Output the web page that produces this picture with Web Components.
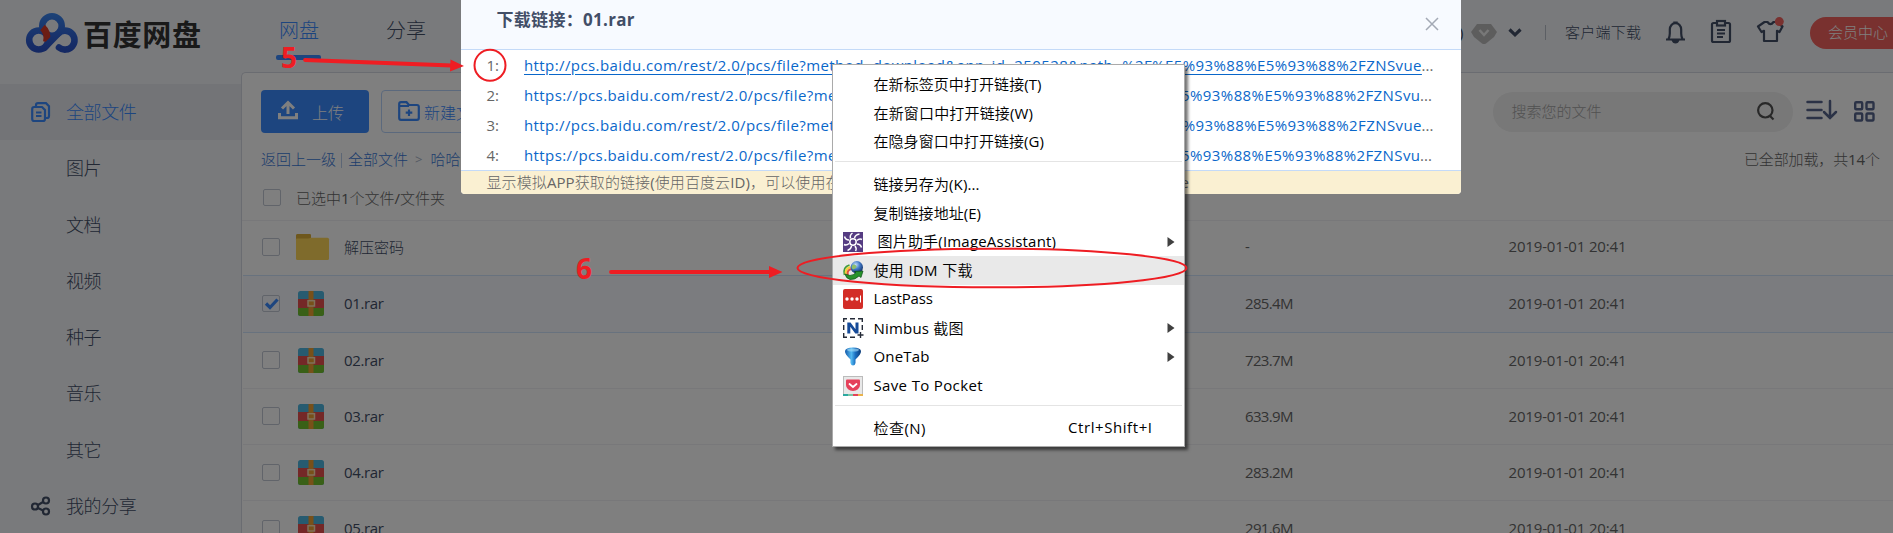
<!DOCTYPE html>
<html lang="zh-CN">
<head>
<meta charset="utf-8">
<title>百度网盘</title>
<style>
html,body{margin:0;padding:0;height:100%;overflow:hidden}
body{font-family:"Open Sans","Noto Sans CJK SC Light","Noto Sans CJK SC",sans-serif;font-size:15px;color:#424e67}
</style>
</head>
<body>
<disk-app></disk-app>
<script>
const ICONS = {
  logo: [52,40,`<defs><linearGradient id="l" x1="0" y1="0" x2="0" y2="40" gradientUnits="userSpaceOnUse"><stop stop-color="#3a86ee"/><stop offset=".6" stop-color="#2f62d6"/><stop offset="1" stop-color="#2a50c4"/></linearGradient></defs><g fill="none" stroke-linecap="round" stroke="url(#l)" stroke-width="6.600"><circle cx="26" cy="13" r="9.700"/><circle cx="12.700" cy="27" r="9.500"/><path d="M16.500 14.500Q22.500 19.500 20.500 29" stroke="#d83a28" stroke-width="7" stroke-linecap="butt"/><path d="M18.500 34.700L32 20.700A9.500 9.500 0 1 1 33 34.500"/></g>`],
  files: [20,20,`<g fill="none" stroke="#3b8bff" stroke-width="2.200"><path d="M5 5V3.200q0-2 2-2h8l3 3V14q0 2-2 2h-2"/><path d="M3.200 5h7.800l3 3v9q0 2-2 2H3.200q-2 0-2-2V7q0-2 2-2z"/><path d="M5 10.500h5.500M5 14h5.500"/></g>`],
  share: [20,20,`<g fill="none" stroke="#424e67" stroke-width="2.200"><circle cx="4" cy="10.500" r="3"/><circle cx="15" cy="4.500" r="3"/><circle cx="15" cy="15.500" r="3"/><path d="M7 9l5-3M7 12l5 2.500"/></g>`],
  upload: [20,20,`<g fill="none" stroke="#fff" stroke-width="3"><path d="M10 14V3M4 8.500L10 2.500l6 6"/><path d="M1.500 13v4.700h17V13"/></g>`],
  newfolder: [22,20,`<g fill="none" stroke="#3b8bff" stroke-width="2.200"><path d="M1.200 5V3q0-1.800 1.800-1.800h5.500L11 4h8q1.800 0 1.800 1.800V17q0 1.800-1.800 1.800H3Q1.200 18.800 1.200 17zM1.200 5H11M11 8.500v6.500M7.700 11.700h6.600"/></g>`],
  folder: [33,26,`<path d="M0 4V2Q0 0 2 0h11.500q1.500 0 1.500 2v5H0z" fill="#dcae38"/><rect y="3.700" width="33" height="22.300" rx="1.500" fill="#ffd659"/><path d="M0 4.500V2Q0 0 2 0h11.500q1.500 0 1.500 2v1q-1 1.500-3 1.500z" fill="#dcae38"/>`],
  rar: [26,25,`<defs><clipPath id="c"><rect width="26" height="25" rx="2.500"/></clipPath></defs><g clip-path="url(#c)"><rect width="26" height="25" fill="#4fb6e0"/><rect y="8" width="26" height="9" fill="#e9504f"/><rect y="17" width="26" height="8" fill="#72c02e"/><rect x="10.500" width="5" height="25" fill="#f0a032"/><rect x="10" y="9.700" width="6.500" height="5.300" fill="#f0a032" stroke="#ffe0b5" stroke-width="1.500"/></g>`],
  diamond: [26,20,`<path d="M6 0h14l6 8-3 5-8 6.500q-2 1-4 0L3 13 0 8z" fill="#bbb"/><path d="M8.500 6l4.500 5 4.500-5" fill="none" stroke="#f0f0f0" stroke-width="2.500"/>`],
  chevron: [14,9,`<path d="M1.500 1.500L7 6.800l5.500-5.300" fill="none" stroke="#424e67" stroke-width="3.200"/>`],
  bell: [21,23,`<path d="M1 18.500h19M3.300 18.500q1.500-2.500 1.500-6V8.500a5.700 6.300 0 0 1 11.400 0v4q0 3.500 1.500 6M8.300 1.500h4.400" fill="none" stroke="#424e67" stroke-width="2.200"/><path d="M6.500 19h8q-1 3.500-4 3.500t-4-3.500z" fill="#424e67"/>`],
  clip: [20,23,`<g fill="none" stroke="#424e67" stroke-width="2.200"><rect x="1" y="3" width="18" height="19" rx="1.500"/><rect x="6" y="1" width="8" height="4.500" fill="#f3f5f9"/><path d="M6 10h8M6 13.500h8M6 17h6"/></g>`],
  shirt: [28,26,`<path d="M8.500 5L2 9.500l3.500 5.500 2.500-1.200V24h13V13.800l2.500 1.200L26.500 9.500 20.500 5h-3q-3 4.200-6 0z" fill="none" stroke="#424e67" stroke-width="2.200" stroke-linejoin="round"/><circle cx="23.300" cy="4.600" r="4.500" fill="#f2625e"/>`],
  search: [18,19,`<g fill="none" stroke="#505050" stroke-width="2.200"><circle cx="8.300" cy="8.300" r="7.200"/><path d="M12.500 13.500l4 4"/></g>`],
  sort: [31,20,`<path d="M1.500 2h14M1.500 10h14M1.500 18h14M24 1v17M18 12l6 6 6-6" fill="none" stroke="#56658c" stroke-width="2.500" stroke-linecap="round"/>`],
  grid: [21,21,`<g fill="none" stroke="#56658c" stroke-width="2.400"><rect x="1.200" y="1.200" width="7" height="7" rx="1"/><rect x="12.500" y="1.200" width="7" height="7" rx="1"/><rect x="1.200" y="12.500" width="7" height="7" rx="1"/><rect x="12.500" y="12.500" width="7" height="7" rx="1"/></g>`],
  close: [14,14,`<path d="M1 1l12 12M13 1L1 13" stroke="#a3a9b5" stroke-width="1.500"/>`],
  arrow: [8,10,`<path d="M.5 0v10L7.500 5z" fill="#404040"/>`],
  image: [20,20,`<rect width="20" height="20" fill="#553c82"/><g fill="none" stroke="#fff" stroke-width="1.500"><circle cx="10" cy="10" r="3.200"/><path d="M7.500 6.500Q6.500 3 9.500 1M11.500 6q1-3.500 5-4M14 8.500q2.500-2.500 5-1M14 12q3.500 0 4.500 3.500M12 14q2 2.500 .5 5M8.500 14q-.5 3.500-4 4.500M6 11.500q-2.500 2.500-5 1M6 8Q2.500 8 1.500 4.500"/></g>`],
  idm: [21,20,`<defs><radialGradient id="g" cx=".4" cy=".3" r=".7"><stop stop-color="#c5e0fb"/><stop offset=".5" stop-color="#4179c7"/><stop offset="1" stop-color="#153469"/></radialGradient></defs><path d="M1.500 14Q-.5 6 6.500 4" fill="none" stroke="#3f9a3a" stroke-width="1.800"/><path d="M3 14Q1.500 7.500 7.500 6" fill="none" stroke="#f3d13b" stroke-width="2"/><path d="M5 14Q3.500 9.500 8 8" fill="none" stroke="#e0533c" stroke-width="2"/><circle cx="13.800" cy="6.300" r="6.200" fill="url(#g)"/><path d="M2 13l5 1.500q4-.5 6-3l-1.500-1 8.500-.5-2 6.500-2-1.500Q12 19 7 18.500 3 17.500 2 13z" fill="#27932b" stroke="#0b4d17" stroke-width=".7"/><path d="M9 4.500q2-2 4 0t-3 4q-2-2-1-4z" fill="#8fbf6a"/>`],
  lastpass: [20,20,`<rect width="20" height="20" rx="2" fill="#d32d27"/><g fill="#fff"><circle cx="4" cy="10" r="1.700"/><circle cx="9" cy="10" r="1.700"/><circle cx="14" cy="10" r="1.700"/><rect x="17" y="6.500" width="1" height="7"/></g>`],
  nimbus: [20,20,`<path d="M.7 4V.7H4M7 .7h5M15 .7h4.300V4M19.300 7v5M.7 7v5M.7 15v4.300H4M7 19.300h5" fill="none" stroke="#252b38" stroke-width="1.400"/><path d="M4.300 15.500V4.500h3.200l5 6.700V4.500h3v11h-3.200l-5-6.700v6.700z" fill="#154a98"/><path d="M17.500 14v6M14.500 17h6" stroke="#252b38" stroke-width="1.400"/>`],
  onetab: [20,20,`<defs><linearGradient id="b" x1="0" x2="1"><stop stop-color="#1459a9"/><stop offset=".4" stop-color="#52b8f0"/><stop offset=".65" stop-color="#1a6ec0"/><stop offset="1" stop-color="#0c3b78"/></linearGradient></defs><path d="M2 4Q2.500 .5 10 .5T18 4q.3 3-5.500 8.500V16q-.5 2.500-2.500 2.500T7.500 16v-3.500Q1.700 7 2 4z" fill="url(#b)"/><ellipse cx="10" cy="3" rx="6" ry="1.600" fill="#a9dff8" opacity=".6"/>`],
  pocket: [20,20,`<rect x=".5" y=".5" width="19" height="19" fill="#e8e8e8" stroke="#bbb"/><path d="M0 19h5" stroke="#2ba8a0" stroke-width="2"/><path d="M5 19h5" stroke="#7bc6a4" stroke-width="2"/><path d="M10 19h5" stroke="#e44458" stroke-width="2"/><path d="M15 19h5" stroke="#e9b34c" stroke-width="2"/><path d="M4 3.500h12q1 0 1 1V9a7 6 0 0 1-14 0V4.500q0-1 1-1z" fill="#e5405a"/><path d="M6.500 8l3.500 3 3.500-3" fill="none" stroke="#fff" stroke-width="1.800" stroke-linecap="round"/>`]
};

class Base extends HTMLElement {
  mount(html){ this.attachShadow({mode:'open'}); const t=document.createElement('template'); t.innerHTML=html; this.shadowRoot.append(t.content.cloneNode(true)); }
}
customElements.define('ui-icon', class extends Base {
  connectedCallback(){ if(this.shadowRoot) return; const [w,h,s]=ICONS[this.getAttribute('name')];
    this.mount(`<style>:host{display:block;flex:none;width:${w}px;height:${h}px}svg{display:block;overflow:visible}</style><svg width="${w}" height="${h}" viewBox="0 0 ${w} ${h}">${s}</svg>`); }
});
/* A one-line label whose tracking is set so that it takes the width in its w attribute. */
customElements.define('fit-text', class extends Base {
  connectedCallback(){ if(this.shadowRoot) return;
    this.mount(`<style>:host{display:block;flex:none;white-space:pre}span{display:inline-block;vertical-align:top;text-decoration:inherit;text-underline-offset:inherit}</style><span><slot></slot></span>`);
    const w=+this.getAttribute('w'), s=this.shadowRoot.querySelector('span'), n=this.textContent.length;
    if(w){ const d=(w-s.getBoundingClientRect().width)/Math.max(1,n-1); s.style.letterSpacing=d.toFixed(3)+'px'; this.style.width=w+'px'; } }
});
customElements.define('check-box', class extends Base {
  connectedCallback(){ if(this.shadowRoot) return;
    this.mount(`<style>:host{display:block;flex:none;box-sizing:border-box;width:18px;height:17.500px;border:1px solid #c2c8d4;border-radius:2px}svg{display:block}</style>${this.hasAttribute('checked')?'<svg width="16" height="16"><path d="M3 7.500L7 11.500l7.500-8" fill="none" stroke="#3b8bff" stroke-width="3.200"/></svg>':''}`); }
});
customElements.define('top-bar', class extends Base {
  connectedCallback(){ this.mount(`<style>
:host{display:flex;height:72px;box-sizing:border-box;align-items:flex-start;justify-content:space-between;white-space:nowrap;color:#424e67}
.l,.r{display:flex;align-items:flex-start}.l{padding-left:26px}
.name{font-family:"Noto Sans CJK SC",sans-serif;font-size:29px;font-weight:700;line-height:40px;margin:13px 0 0 5px;color:#333}
.tab{font-size:20px;line-height:30px;margin-top:16px}.on{color:#3b8bff;margin-left:78px}
.bar{height:5px;width:45px;border-radius:2px;background:#3b8bff;margin:9px 0 0 -3px}
.r{width:434px;flex:none}.r>*{flex:none}.t{line-height:24px;margin-top:20px}
.pill{box-sizing:border-box;width:100px;height:32px;border-radius:16px 0 0 16px;background:#f2625e;color:#fff;padding:3px 0 0 18px;line-height:24px;margin:17px 0 0 26px}
</style>
<div class="l"><ui-icon name="logo" style="margin-top:13px"></ui-icon><fit-text class="name" w="118">百度网盘</fit-text>
<div class="tab on"><fit-text w="40">网盘</fit-text><div class="bar"></div></div><fit-text class="tab" w="40" style="margin-left:65px">分享</fit-text></div>
<div class="r"><span class="t" style="width:12px">)</span><ui-icon name="diamond" style="margin-top:24px"></ui-icon><ui-icon name="chevron" style="margin:28px 0 0 11px"></ui-icon><i style="width:1px;height:15px;background:#b9bec9;margin:25px 0 0 23px"></i><fit-text class="t" w="76" style="margin-left:19px">客户端下载</fit-text>
<ui-icon name="bell" style="margin:20.500px 0 0 24px"></ui-icon><ui-icon name="clip" style="margin:20px 0 0 25px"></ui-icon><ui-icon name="shirt" style="margin:17px 0 0 25px"></ui-icon><div class="pill"><fit-text w="60">会员中心</fit-text></div></div>`); }
});
customElements.define('side-nav', class extends Base {
  connectedCallback(){ const items=[['全部文件','files'],['图片'],['文档'],['视频'],['种子'],['音乐'],['其它'],['我的分享','share']];
    this.mount(`<style>:host{display:block;width:241px;flex:none;padding-top:12px;box-sizing:border-box;font-size:18px}
.i{display:flex;align-items:center;height:56.250px;box-sizing:border-box;padding-left:31px}.i.on{background:#e7e9ee;color:#3b8bff}.s{width:35px;flex:none}fit-text{margin-top:-2px}</style>
${items.map((x,k)=>`<div class="i${k?'':' on'}"><div class="s">${x[1]?`<ui-icon name="${x[1]}"></ui-icon>`:''}</div><fit-text w="${x[0].length*17.7}">${x[0]}</fit-text></div>`).join('')}`); }
});
customElements.define('file-row', class extends Base {
  connectedCallback(){ const a=n=>this.getAttribute(n), sel=this.hasAttribute('selected'), rar=a('kind')=='rar';
    this.mount(`<style>:host{display:flex;flex:none;align-items:center;box-sizing:border-box;height:${a('h')}px;padding:0 0 ${rar?0:2}px 19px;border-bottom:1px solid ${sel?'#d0e4fc':'#f0f1f5'};background:${sel?'#f6f8ff':'none'}}
.ic{width:${rar?'46px':'48px'};margin-left:${rar?'18px':'16px'};flex:none}.n{width:901px;color:#424e67}.m{color:#666}.s{width:263.500px;flex:none}.n{flex:none}fit-text{margin-top:-1px}</style>
<check-box ${sel?'checked':''}></check-box><div class="ic"><ui-icon name="${a('kind')}"></ui-icon></div><div class="n"><fit-text w="${a('nw')}">${a('name')}</fit-text></div><div class="m s"><fit-text ${a('size')=='-'?'':'w="48.5"'}>${a('size')}</fit-text></div><fit-text class="m" w="118">2019-01-01 20:41</fit-text>`); }
});
customElements.define('file-panel', class extends Base {
  connectedCallback(){ const f=[['01.rar','285.4M',57],['02.rar','723.7M',56],['03.rar','633.9M',56],['04.rar','283.2M',56.5],['05.rar','291.6M',56]];
    this.mount(`<style>:host{display:flex;flex-direction:column;flex:1;min-width:0;box-sizing:border-box;background:#fff;border:1px solid #d5d8e2;border-width:1px 0 0 1px;border-radius:5px 0 0 0;white-space:nowrap}
.tools{display:flex;height:60px;padding:17px 18px 0 19px;box-sizing:border-box;flex:none}
.b{display:flex;align-items:center;box-sizing:border-box;height:43px;border-radius:4px;flex:none}
.up{width:108px;background:#3b8bff;color:#fff;padding-left:17px;font-size:16px}.nf{width:150px;border:1px solid #b7d2fb;color:#3b8bff;margin-left:12px;padding-left:16px;font-size:16px}
.q{display:flex;align-items:center;box-sizing:border-box;width:300px;height:40px;border-radius:20px;background:#f0f0f0;color:#a2a2a2;margin:2px 0 0 auto;padding:0 18px 2px 18.500px;justify-content:space-between}
.cr{display:flex;align-items:center;box-sizing:border-box;height:50.500px;padding:0 13px 0 19px;color:#3b79d8;flex:none}
.ch{display:flex;align-items:center;box-sizing:border-box;height:37.500px;padding:0 0 5px 21px;border-bottom:1px solid #f0f1f5;color:#666;flex:none}
.rows{margin-left:1px}</style>
<div class="tools"><div class="b up"><ui-icon name="upload" style="margin-top:-4px"></ui-icon><fit-text w="32" style="margin:0 0 0 14px">上传</fit-text></div><div class="b nf"><ui-icon name="newfolder" style="margin-top:-2px"></ui-icon><fit-text style="margin:0 0 0 4px">新建文件夹</fit-text></div>
<div class="q"><fit-text w="90" style="margin-top:-2px">搜索您的文件</fit-text><ui-icon name="search"></ui-icon></div><ui-icon name="sort" style="margin:10px 0 0 13px"></ui-icon><ui-icon name="grid" style="margin:11px 0 0 17px"></ui-icon></div>
<div class="cr"><fit-text w="75">返回上一级</fit-text><i style="width:1px;height:15px;background:#b9cdea;margin:4px 6px 0 5px"></i><fit-text w="60">全部文件</fit-text><span style="color:#a9b5c8;font-size:13px;margin:1px 8px 0 7px">&gt;</span><fit-text>哈哈</fit-text><fit-text w="136" style="color:#666;margin-left:auto">已全部加载，共14个</fit-text></div>
<div class="ch"><check-box style="margin-top:-4px"></check-box><fit-text w="149" style="margin:-4px 0 0 15px">已选中1个文件/文件夹</fit-text></div>
<div class="rows"><file-row h="54.5" kind="folder" nw="60" name="解压密码" size="-" style="border-color:#d0e4fc"></file-row>${f.map((r,k)=>`<file-row h="${r[2]}" kind="rar" nw="40" name="${r[0]}" size="${r[1]}" ${k?'':'selected'}></file-row>`).join('')}</div>`); }
});
customElements.define('link-dialog', class extends Base {
  connectedCallback(){ const u='://pcs.baidu.com/rest/2.0/pcs/file?method=download&amp;app_id=250528&amp;path=%2F%E5%93%88%E5%93%88%2FZNSvu';
    const L=[['http','e',897.5],['https','',896],['http','e',897.5],['https','',896]];
    this.mount(`<style>:host{display:flex;flex-direction:column;width:1000px;height:194px;background:#fff;border-radius:0 0 4px 4px;overflow:hidden;white-space:nowrap}
header{display:flex;align-items:flex-start;justify-content:space-between;box-sizing:border-box;height:50px;flex:none;background:#f7faff;border-bottom:1px solid #c4daf8;padding:7px 22.500px 0 35.500px;font-family:"Open Sans","Noto Sans CJK SC",sans-serif;font-size:17px;line-height:26px;font-weight:700;color:#424e67}
.row{display:flex;height:30px;line-height:30px;color:#666;padding-left:25.500px}.num{width:37.500px}.a{color:#0a67ca}.row:first-child .a{text-decoration:underline;text-underline-offset:3px}
footer{display:flex;box-sizing:border-box;height:24px;border-top:1px solid #c4daf8;background:#faf0d2;color:#666;padding:0 272px 0 25.500px;line-height:23px;justify-content:space-between}</style>
<header><fit-text w="138">下载链接：01.rar</fit-text><ui-icon name="close" style="margin-top:10px"></ui-icon></header>
<div style="height:120px;flex:none">${L.map((l,i)=>`<div class="row"><fit-text class="num">${i+1}:</fit-text><fit-text class="a" w="${l[2]}">${l[0]+u+l[1]}</fit-text><span>...</span></div>`).join('')}</div>
<footer><fit-text w="354">显示模拟APP获取的链接(使用百度云ID)，可以使用在</fit-text><span>e</span></footer>`); }
});
customElements.define('menu-item', class extends Base {
  connectedCallback(){ const ic=this.getAttribute('icon'), k=this.getAttribute('key');
    this.mount(`<style>:host{display:flex;align-items:center;height:28.750px;padding-left:10px;box-sizing:border-box;color:#000}:host([hover]){background:#e9e9e9}.i{width:30.500px;flex:none}.k{margin-left:auto;margin-right:32px}.k,slot{margin-top:-2px}.s{margin:0 9px 0 auto}::slotted(*){margin-top:-2px}</style>
<div class="i">${ic?`<ui-icon name="${ic}"></ui-icon>`:''}</div><slot></slot>${k?`<fit-text class="k" w="84">${k}</fit-text>`:''}${this.hasAttribute('sub')?'<ui-icon class="s" name="arrow"></ui-icon>':''}`); }
});
customElements.define('context-menu', class extends Base {
  connectedCallback(){ const I=(t,w,x='')=>`<menu-item ${x}><fit-text w="${w}">${t}</fit-text></menu-item>`;
    this.mount(`<style>:host{display:block;box-sizing:border-box;width:353px;height:383px;background:#fff;border:1px solid #aaa;padding-top:5px;box-shadow:3px 3px 3px rgba(0,0,0,.55);white-space:nowrap;font-family:"Open Sans","Noto Sans CJK SC DemiLight","Noto Sans CJK SC",sans-serif}hr{border:0;height:1px;background:#e4e4e4;margin:4.700px 2px 8px}</style>
${I('在新标签页中打开链接(T)',168)}${I('在新窗口中打开链接(W)',159.5)}${I('在隐身窗口中打开链接(G)',170.5)}<hr>
${I('链接另存为(K)...',106)}${I('复制链接地址(E)',107.5)}<menu-item icon="image" sub><fit-text w="178.5" style="margin-left:4px">图片助手(ImageAssistant)</fit-text></menu-item>${I('使用 IDM 下载',99,'icon="idm" hover')}${I('LastPass',59.5,'icon="lastpass"')}${I('Nimbus 截图',90,'icon="nimbus" sub')}${I('OneTab',56,'icon="onetab" sub')}${I('Save To Pocket',109,'icon="pocket"')}<hr>${I('检查(N)',52,'key="Ctrl+Shift+I"')}`); }
});
/* Red hand-placed marks on a free canvas above the page. */
customElements.define('mark-layer', class extends Base {
  connectedCallback(){ this.mount(`<style>:host{display:block}svg{display:block}text{font:700 28px "Open Sans","Noto Sans",sans-serif}</style>
<svg width="1893" height="533" fill="#ee1d23"><text x="281" y="68">5</text><text x="576" y="278.500">6</text>
<g fill="none" stroke="#ee1d23"><path d="M305 60L452 65.500M611 272H770" stroke-width="3.800" stroke-linecap="round"/><circle cx="490" cy="65.300" r="15.500" stroke-width="2"/><ellipse cx="992" cy="268" rx="194.500" ry="19.300" stroke-width="2"/></g>
<path d="M450.500 59.500L464 66l-14 5.500zM769 266l13.500 6-13.500 6z"/></svg>`); }
});
customElements.define('disk-app', class extends Base {
  connectedCallback(){ this.mount(`<style>:host{display:block;position:relative;width:1893px;height:533px;overflow:hidden;background:#f3f5f9}
.body{display:flex;height:461px;overflow:hidden}.mask{position:absolute;inset:0;background:rgba(0,0,0,.5)}
link-dialog{position:absolute;left:461px;top:0}context-menu{position:absolute;left:832px;top:64px}mark-layer{position:absolute;left:0;top:0}</style>
<top-bar></top-bar><div class="body"><side-nav></side-nav><file-panel></file-panel></div><div class="mask"></div><link-dialog></link-dialog><context-menu></context-menu><mark-layer></mark-layer>`); }
});
</script>
</body>
</html>
